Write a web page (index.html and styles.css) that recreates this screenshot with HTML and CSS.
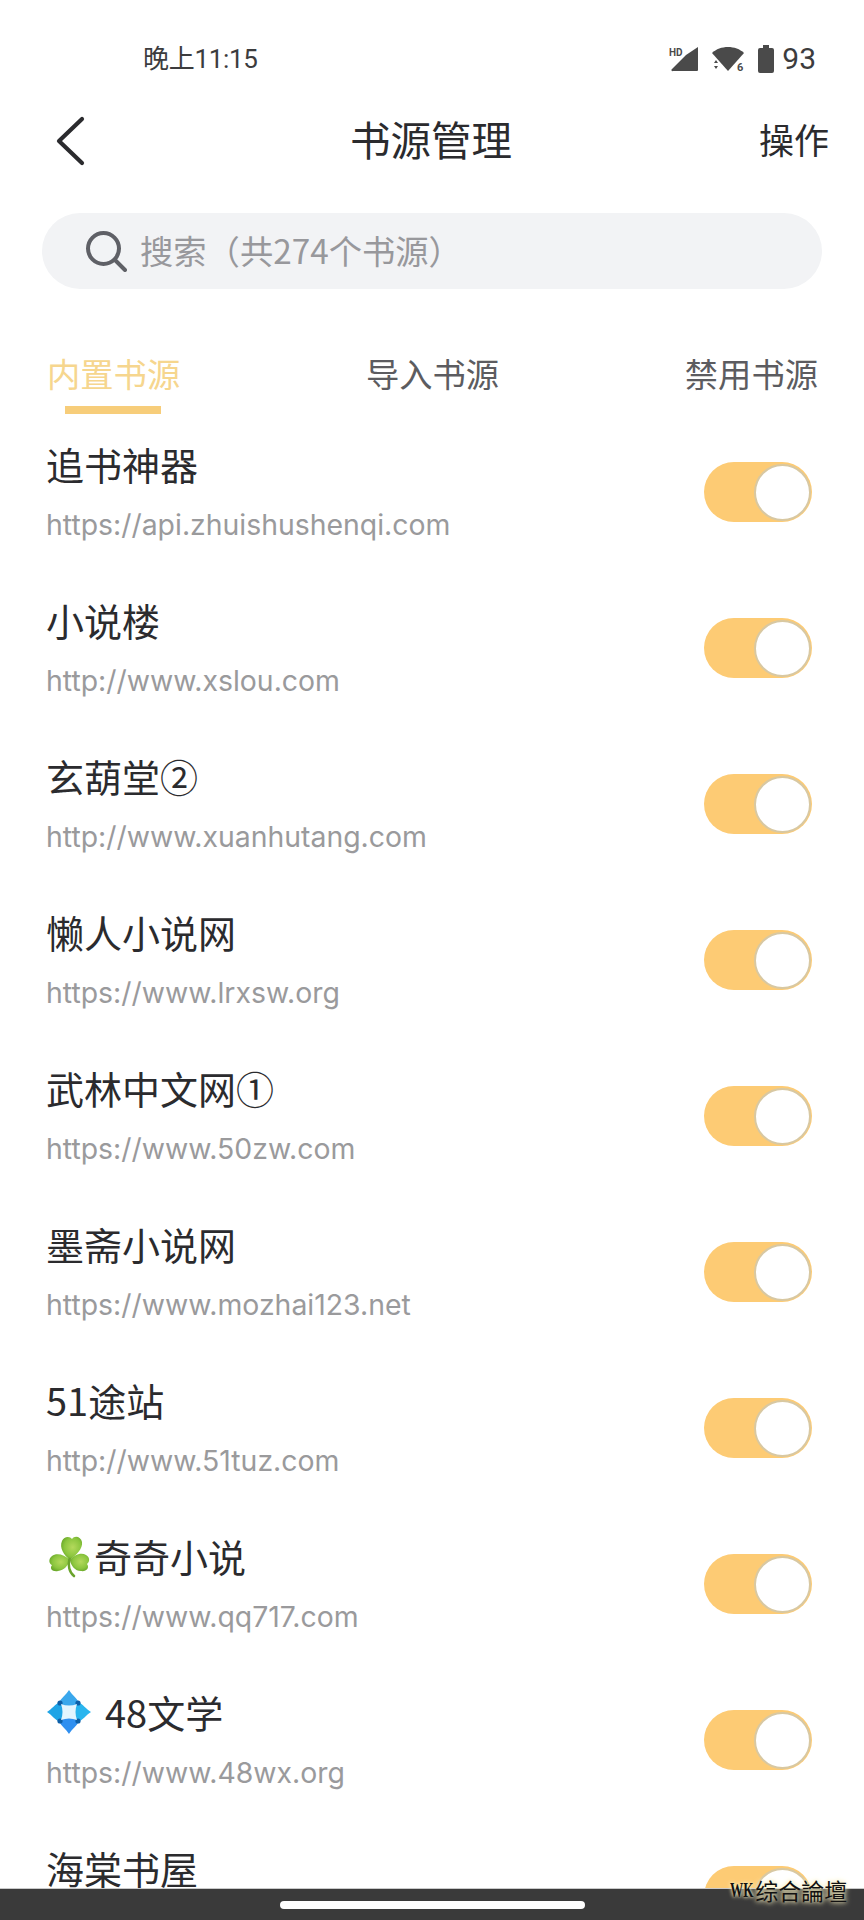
FILE: index.html
```html
<!DOCTYPE html>
<html lang="zh-CN">
<head>
<meta charset="utf-8">
<title>书源管理</title>
<link rel="stylesheet" href="styles.css">
</head>
<body>
<div class="phone">
  <div class="status">
    <span class="time">晚上11:15</span>
    <div class="status-icons">
      <svg class="ic-signal" width="30" height="26" viewBox="0 0 30 26">
        <text x="0" y="10" class="hd">HD</text>
        <path d="M29 1 V24 a1 1 0 0 1 -1 1 H4 a1 1 0 0 1 -1-2 L17 9 Z" fill="#4a4a4a"/>
      </svg>
      <svg class="ic-wifi" width="34" height="30" viewBox="0 0 34 30">
        <path d="M1 7 C9 -1 25 -1 33 7 L17 25 Z" fill="#4a4a4a"/>
        <path d="M3 17 L5 14 L7 17 Z M3 20 H7 L5 23 Z" fill="#4a4a4a"/>
        <text x="26" y="25" class="six">6</text>
      </svg>
      <svg class="ic-batt" width="16" height="28" viewBox="0 0 16 28">
        <path d="M5 0 H11 V3 H14 a2 2 0 0 1 2 2 V26 a2 2 0 0 1 -2 2 H2 a2 2 0 0 1 -2-2 V5 a2 2 0 0 1 2-2 H5 Z" fill="#4a4a4a"/>
      </svg>
      <span class="batt-num">93</span>
    </div>
  </div>
  <header class="nav">
    <svg class="back" width="30" height="50" viewBox="0 0 30 50">
      <path d="M27 3 L4 25 L27 47" fill="none" stroke="#2b2b2e" stroke-width="4.2" stroke-linecap="round" stroke-linejoin="round"/>
    </svg>
    <h1 class="title">书源管理</h1>
    <span class="action">操作</span>
  </header>
  <div class="search">
    <svg class="search-ic" width="42" height="42" viewBox="0 0 42 42">
      <circle cx="18.5" cy="18.5" r="15.5" fill="none" stroke="#5f6066" stroke-width="4"/>
      <path d="M30 30 L40 40" stroke="#5f6066" stroke-width="4" stroke-linecap="round"/>
    </svg>
    <span class="search-text">搜索（共274个书源）</span>
  </div>
  <nav class="tabs">
    <span class="tab active">内置书源</span>
    <span class="tab">导入书源</span>
    <span class="tab">禁用书源</span>
  </nav>
  <main class="list">
    <div class="row">
      <div class="info"><div class="name">追书神器</div><div class="url">https://api.zhuishushenqi.com</div></div>
      <span class="toggle"><span class="knob"></span></span>
    </div>
    <div class="row">
      <div class="info"><div class="name">小说楼</div><div class="url">http://www.xslou.com</div></div>
      <span class="toggle"><span class="knob"></span></span>
    </div>
    <div class="row">
      <div class="info"><div class="name">玄葫堂②</div><div class="url">http://www.xuanhutang.com</div></div>
      <span class="toggle"><span class="knob"></span></span>
    </div>
    <div class="row">
      <div class="info"><div class="name">懒人小说网</div><div class="url">https://www.lrxsw.org</div></div>
      <span class="toggle"><span class="knob"></span></span>
    </div>
    <div class="row">
      <div class="info"><div class="name">武林中文网①</div><div class="url">https://www.50zw.com</div></div>
      <span class="toggle"><span class="knob"></span></span>
    </div>
    <div class="row">
      <div class="info"><div class="name">墨斋小说网</div><div class="url">https://www.mozhai123.net</div></div>
      <span class="toggle"><span class="knob"></span></span>
    </div>
    <div class="row">
      <div class="info"><div class="name">51途站</div><div class="url">http://www.51tuz.com</div></div>
      <span class="toggle"><span class="knob"></span></span>
    </div>
    <div class="row">
      <div class="info"><div class="name"><svg class="emoji emoji-clover" width="44" height="44" viewBox="0 0 44 44">
        <defs>
          <radialGradient id="leaf" cx="0.55" cy="0.45" r="0.65">
            <stop offset="0" stop-color="#b4d95c"/>
            <stop offset="0.6" stop-color="#8cc63f"/>
            <stop offset="1" stop-color="#5f9e22"/>
          </radialGradient>
        </defs>
        <path d="M23 26 C17 21 12 14 15 7 C17 2 23 2 25 5 C28 1 34 3 35 8 C36 15 29 21 23 26 Z" fill="url(#leaf)"/>
        <path d="M23 26 C17 20 9 19 5 22 C1 25 2 30 5 31 C2 35 6 38 11 37 C17 36 21 32 23 26 Z" fill="url(#leaf)"/>
        <path d="M23 26 C27 21 34 18 39 21 C43 23 43 28 40 30 C43 34 39 38 34 37 C28 37 24 32 23 26 Z" fill="url(#leaf)"/>
        <path d="M22.5 25 C21 31 22 38 27 42" fill="none" stroke="#6aa32c" stroke-width="2.6" stroke-linecap="round"/>
      </svg>奇奇小说</div><div class="url">https://www.qq717.com</div></div>
      <span class="toggle"><span class="knob"></span></span>
    </div>
    <div class="row">
      <div class="info"><div class="name"><svg class="emoji emoji-gap" width="44" height="44" viewBox="0 0 44 44">
        <path d="M22 0 C25 5 30 8 32 13 L22 22 L12 13 C14 8 19 5 22 0 Z" fill="#3aa7ec"/>
        <path d="M0 22 C5 19 8 14 13 12 L22 22 L13 32 C8 30 5 25 0 22 Z" fill="#1fa4e6"/>
        <path d="M44 22 C39 19 36 14 31 12 L22 22 L31 32 C36 30 39 25 44 22 Z" fill="#2ab5ee"/>
        <path d="M22 44 C25 39 30 36 32 31 L22 22 L12 31 C14 36 19 39 22 44 Z" fill="#2f8ff0"/>
        <circle cx="13" cy="13" r="2.6" fill="#0d5fa8"/>
        <circle cx="31" cy="13" r="2.6" fill="#0d5fa8"/>
        <circle cx="13" cy="31" r="2.6" fill="#0d5fa8"/>
        <circle cx="31" cy="31" r="2.6" fill="#0d5fa8"/>
        <path d="M14 14 Q22 17 30 14 Q27 22 30 30 Q22 27 14 30 Q17 22 14 14 Z" fill="#e4f5fe"/>
      </svg>48文学</div><div class="url">https://www.48wx.org</div></div>
      <span class="toggle"><span class="knob"></span></span>
    </div>
    <div class="row">
      <div class="info"><div class="name">海棠书屋</div></div>
      <span class="toggle"><span class="knob"></span></span>
    </div>
  </main>
  <div class="home-bar"><span class="pill"></span></div>
  <span class="watermark"><span class="wm-latin">WK</span>综合論壇</span>
</div>
</body>
</html>
```
FILE: styles.css
```css
* { box-sizing: border-box; }
html, body { margin: 0; padding: 0; background: #fff; }
body { font-family: "Noto Sans CJK SC", sans-serif; }

.phone {
  position: relative;
  width: 864px;
  height: 1920px;
  display: flex;
  flex-direction: column;
  overflow: hidden;
  background: #fff;
}

.status {
  flex: none;
  height: 118px;
  display: flex;
  align-items: center;
  justify-content: space-between;
  padding: 0 48px 0 143px;
}
.time { font: 26px/1 "Roboto", "Noto Sans CJK SC", sans-serif; letter-spacing: -0.3px; color: #3c3c3e; }
.status-icons { display: flex; align-items: center; }
.ic-signal { margin-right: 12px; }
.ic-wifi { margin: 0 13px -4px 0; }
.ic-batt { margin-right: 8px; }
.hd { font: 700 10px "Roboto", sans-serif; fill: #4a4a4a; }
.six { font: 700 11px "Roboto", sans-serif; fill: #4a4a4a; }
.batt-num { font: 30px/1 "Roboto", sans-serif; color: #3c3c3e; }

.nav {
  flex: none;
  height: 46px;
  display: flex;
  align-items: center;
  padding: 0 35px 0 55px;
}
.back { flex: none; }
.title {
  margin: -4px 0 0 265px;
  font: 400 40.5px/46px "Noto Sans CJK SC", sans-serif;
  color: #2b2b2e;
}
.action { margin: -4px 0 0 auto; font: 35px/46px "Noto Sans CJK SC", sans-serif; color: #2b2b2e; }

.search {
  flex: none;
  height: 76px;
  margin: 49px 42px 0;
  padding-left: 43px;
  display: flex;
  align-items: center;
  border-radius: 38px;
  background: #f2f3f5;
}
.search-ic { flex: none; margin-right: 13px; }
.search-text { margin-top: -2px; font: 33.3px/1 "Noto Sans CJK SC", sans-serif; color: #98989c; }

.tabs {
  flex: none;
  height: 125px;
  display: flex;
  justify-content: space-between;
  padding: 61px 46px 0 47px;
}
.tab { position: relative; font: 33.3px/46px "Noto Sans CJK SC", sans-serif; color: #5c5c60; }
.tab.active { color: #f6d68e; }
.tab.active::after {
  content: "";
  position: absolute;
  left: 18px;
  top: 56px;
  width: 96px;
  height: 8px;
  background: #f7cd7a;
}

.list { flex: 1; min-height: 0; }
.row {
  height: 156px;
  display: flex;
  align-items: flex-start;
  justify-content: space-between;
  padding: 0 52px 0 46px;
}
.info { display: flex; flex-direction: column; gap: 22px; margin-top: 31px; }
.name {
  display: flex;
  align-items: center;
  height: 38px;
  font: 38px/38px "Noto Sans CJK SC", sans-serif;
  color: #2b2b2e;
}
.url { font: 28.4px/40px "Inter", sans-serif; color: #9a9a9c; }
.emoji { flex: none; margin-left: 1px; }
.emoji-clover { margin-right: 3px; }
.emoji-gap { margin-right: 14px; }

.toggle {
  flex: none;
  width: 108px;
  height: 60px;
  margin-top: 48px;
  display: flex;
  justify-content: flex-end;
  align-items: center;
  padding-right: 1px;
  border-radius: 30px;
  background: #fdcb74;
}
.knob {
  width: 57px;
  height: 57px;
  border-radius: 50%;
  background: #fff;
  border: 2px solid #d8c8a2;
}

.home-bar {
  position: relative;
  flex: none;
  height: 32px;
  display: flex;
  align-items: center;
  justify-content: center;
  background: #3a3a3a;
  border-top: 1px solid #c9c9c9;
}
.pill { width: 305px; height: 8px; border-radius: 4px; background: #fff; }

.watermark {
  position: absolute;
  left: 730px;
  top: 1876px;
  display: flex;
  font: 400 23px/28px "Noto Sans CJK TC", serif;
  color: #111;
  text-shadow: 0 0 4px #f6eebf, 0 0 6px #f6eebf;
  white-space: nowrap;
}
.wm-latin {
  font: 700 22px/28px "Liberation Serif", serif;
  transform: scaleX(0.6);
  transform-origin: left center;
  margin-right: -14px;
}
```
